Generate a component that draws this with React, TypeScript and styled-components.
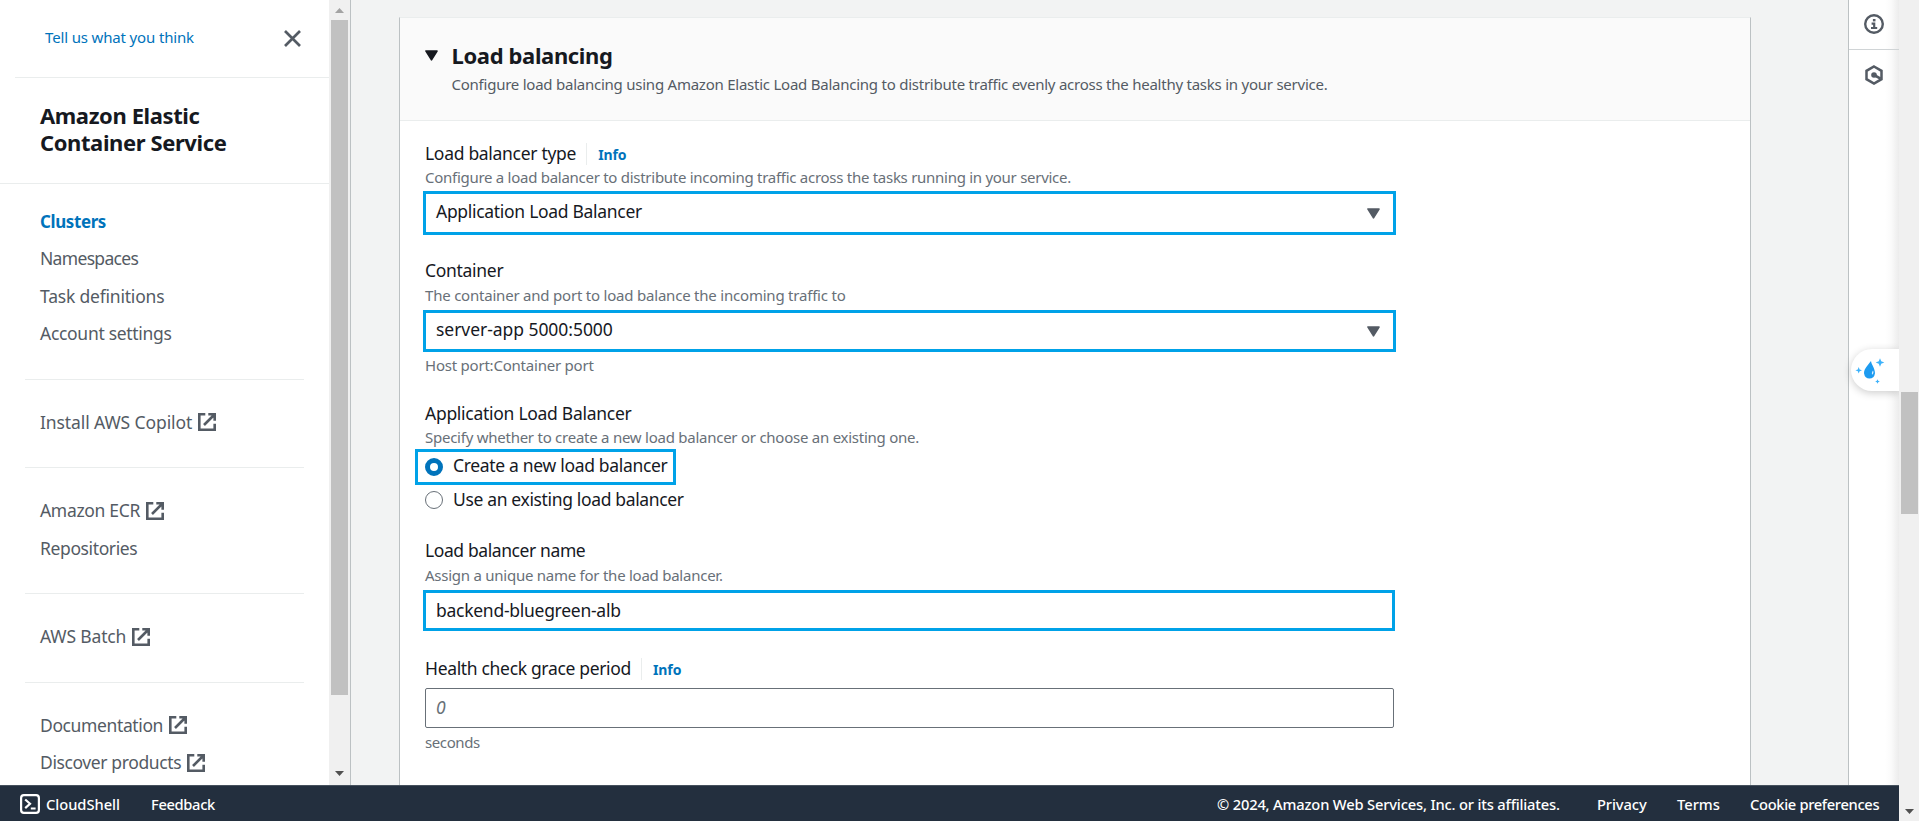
import React from 'react';
import styled, { createGlobalStyle } from 'styled-components';

const GlobalStyle = createGlobalStyle`
  * { box-sizing: border-box; }
  body {
    margin: 0;
    overflow: hidden;
    font-family: "Noto Sans", "Open Sans", sans-serif;
    color: #16191f;
  }
`;

const Page = styled.div`
  display: flex;
  width: 1919px;
  height: 821px;
  background: #f2f3f3;
`;

const Console = styled.div`
  display: flex;
  flex-direction: column;
  width: 1899px;
  height: 821px;
`;

const Workspace = styled.div`
  display: flex;
  height: 785px;
  overflow: hidden;
`;

/* ---------- scrollbars ---------- */

const Scrollbar = styled.div<{ $width: number }>`
  display: flex;
  flex-direction: column;
  align-items: center;
  flex: none;
  width: ${(p) => p.$width}px;
  height: 100%;
  background: #f0f0f0;
`;

const ArrowCell = styled.div<{ $lift?: number }>`
  display: flex;
  align-items: center;
  justify-content: center;
  height: 20px;
  flex: none;
  padding-bottom: ${(p) => p.$lift ?? 0}px;
`;

const Track = styled.div<{ $offset: number }>`
  flex: 1;
  padding-top: ${(p) => p.$offset}px;
`;

const Thumb = styled.div<{ $length: number }>`
  width: 17px;
  height: ${(p) => p.$length}px;
  background: #c1c1c1;
`;

const ScrollArrow = ({ up }: { up?: boolean }) => (
  <svg width="9" height="5" viewBox="0 0 9 5">
    <path d={up ? 'M0 5 4.5 0 9 5z' : 'M0 0 4.5 5 9 0z'} fill={up ? '#a3a3a3' : '#505050'} />
  </svg>
);

/* ---------- sidebar ---------- */

const Sidebar = styled.aside`
  display: flex;
  width: 351px;
  flex: none;
  border-right: 1px solid #bcc1c3;
  background: #fff;
`;

const SidebarContent = styled.div`
  width: 329px;
  flex: none;
  overflow: hidden;
`;

const SidebarTop = styled.div`
  display: flex;
  align-items: center;
  justify-content: space-between;
  height: 78px;
  margin-left: 15px;
  padding: 0 28px 1px 30px;
  border-bottom: 1px solid #eaeded;
`;

const FeedbackLink = styled.a`
  font-size: 15px;
  line-height: 22px;
  letter-spacing: -0.15px;
  color: #0073bb;
  margin-bottom: 2px;
`;

const ServiceTitle = styled.h2`
  height: 106px;
  margin: 0;
  padding: 24px 100px 0 40px;
  border-bottom: 1px solid #eaeded;
  font-size: 22px;
  line-height: 27px;
  font-weight: 700;
  letter-spacing: -0.4px;
`;

const Nav = styled.nav`
  padding-top: 18.5px;
`;

const NavItem = styled.a<{ $active?: boolean; $track: number }>`
  display: flex;
  align-items: center;
  gap: 6px;
  height: 37.5px;
  padding-left: 40px;
  font-size: ${(p) => (p.$active ? 16.9 : 17.5)}px;
  line-height: 27px;
  white-space: nowrap;
  letter-spacing: ${(p) => p.$track}px;
  font-weight: ${(p) => (p.$active ? 700 : 400)};
  color: ${(p) => (p.$active ? '#0073bb' : '#545b64')};
`;

const NavDivider = styled.hr`
  height: 1px;
  margin: 26px 25px 24px;
  border: 0;
  background: #eaeded;
`;

const ExternalIcon = () => (
  <svg width="18" height="18" viewBox="0 0 18 18" fill="none" stroke="#545b64" strokeWidth="2.6">
    <path d="M7.3 1.3h-6v15.4h15.4v-6" />
    <path d="M10.3 1.3h6.4v6.4M16.5 1.5 6 12" />
  </svg>
);

const CloseIcon = () => (
  <svg width="17" height="17" viewBox="0 0 17 17" stroke="#545b64" strokeWidth="2.7">
    <path d="M1 1l15 15M16 1 1 16" />
  </svg>
);

/* ---------- main panel ---------- */

const Main = styled.main`
  flex: 1;
  padding: 17px 0 0 48px;
`;

const Card = styled.section`
  width: 1352px;
  height: 780px;
  background: #fff;
  border: 1px solid #bcc1c3;
  border-top-color: #eaeded;
`;

const CardHeader = styled.header`
  display: flex;
  gap: 15px;
  height: 103px;
  padding: 23px 25px 0 24.5px;
  background: #fafafa;
  border-bottom: 1px solid #eaeded;
`;

const CardTitle = styled.h2`
  margin: 0;
  font-size: 22px;
  line-height: 28px;
  font-weight: 700;
  letter-spacing: -0.36px;
`;

const CardText = styled.p`
  margin: 0;
  padding-top: 4px;
  font-size: 15px;
  line-height: 22px;
  letter-spacing: -0.24px;
  color: #545b64;
`;

const CaretSlot = styled.div`
  padding-top: 9px;
  width: 12px;
`;

const CaretSvg = styled.svg`
  display: block;
`;

const Caret = ({ color = '#545b64' }: { color?: string }) => (
  <CaretSvg width="13" height="11" viewBox="0 0 13 11">
    <path d="M1 1h11L6.5 9.8z" fill={color} stroke={color} strokeWidth="1.6" strokeLinejoin="round" />
  </CaretSvg>
);

const CardBody = styled.div`
  padding: 19px 0 0 25px;
`;

const Field = styled.div<{ $gap?: number }>`
  display: flex;
  flex-direction: column;
  align-items: flex-start;
  padding-top: ${(p) => p.$gap ?? 0}px;
`;

const LabelRow = styled.div`
  display: flex;
  align-items: center;
  height: 26px;
`;

const Label = styled.label<{ $track: number }>`
  font-size: 17.5px;
  line-height: 26px;
  letter-spacing: ${(p) => p.$track}px;
`;

const InfoLink = styled.a`
  height: 22px;
  margin: 2px 0 0 10px;
  padding-left: 11px;
  border-left: 1px solid #eaeded;
  font-size: 14px;
  line-height: 24px;
  font-weight: 700;
  letter-spacing: -0.1px;
  color: #0073bb;
`;

const Hint = styled.div<{ $track: number; $gap?: number }>`
  margin-top: ${(p) => p.$gap ?? 0}px;
  font-size: 15px;
  line-height: 22px;
  letter-spacing: ${(p) => p.$track}px;
  color: #687078;
`;

const Control = styled.div<{ $height: number; $gap: number; $width: number; $lift: number; $track: number }>`
  display: flex;
  align-items: center;
  justify-content: space-between;
  width: ${(p) => p.$width}px;
  height: ${(p) => p.$height}px;
  margin: ${(p) => p.$gap}px 0 0 -2px;
  padding: 0 13px 0 10px;
  border: 3px solid #00a2e8;
  font-size: 17.5px;
  line-height: 27px;
  letter-spacing: ${(p) => p.$track}px;

  > span {
    padding-bottom: ${(p) => p.$lift}px;
  }
`;

const PlainInput = styled.div`
  width: 969px;
  height: 40px;
  margin-top: 7px;
  padding: 0 10px;
  border: 1px solid #687078;
  border-radius: 2px;
  font-size: 17.5px;
  line-height: 36px;
  font-style: italic;
  color: #687078;
`;

const RadioRow = styled.div<{ $selected?: boolean; $track: number }>`
  display: flex;
  align-items: center;
  gap: 10px;
  height: ${(p) => (p.$selected ? 36 : 30)}px;
  width: ${(p) => (p.$selected ? '261px' : 'auto')};
  margin-top: ${(p) => (p.$selected ? 1 : 0)}px;
  margin-left: ${(p) => (p.$selected ? -10 : 0)}px;
  padding-left: ${(p) => (p.$selected ? 7 : 0)}px;
  border: ${(p) => (p.$selected ? '3px solid #00a2e8' : '0')};
  font-size: 17.5px;
  line-height: 24px;
  letter-spacing: ${(p) => p.$track}px;
  white-space: nowrap;

  > span {
    padding-bottom: ${(p) => (p.$selected ? 4 : 3)}px;
  }
`;

const RadioMark = styled.i<{ $on?: boolean }>`
  width: 18px;
  height: 18px;
  border-radius: 50%;
  background: #fff;
  border: ${(p) => (p.$on ? '5px solid #0073bb' : '1.3px solid #687078')};
`;

/* ---------- right rail ---------- */

const Rail = styled.aside`
  position: relative;
  width: 51px;
  flex: none;
  border-left: 1px solid #bcc1c3;
  background: linear-gradient(to right, #fff 36px, #fbfbfb 42px, #ececec 50px);
`;

const RailButton = styled.div<{ $ruled?: boolean }>`
  display: flex;
  align-items: center;
  justify-content: center;
  height: 50px;
  padding-bottom: ${(p) => (p.$ruled ? 1 : 0)}px;
  border-bottom: ${(p) => (p.$ruled ? '1px solid #d0d4d6' : '0')};
`;

const AssistantTab = styled.div`
  position: absolute;
  right: 0;
  top: 349px;
  width: 48px;
  height: 42px;
  border-radius: 21px 0 0 21px;
  background: #fff;
  box-shadow: 0 2px 9px rgba(0, 0, 0, 0.2);
`;

/* ---------- footer ---------- */

const Footer = styled.footer`
  display: flex;
  align-items: center;
  height: 36px;
  padding: 0 20px;
  background: #232f3e;
  border-top: 1px solid #46515d;
  color: #fff;
  font-size: 14.7px;
  font-weight: 500;
  line-height: 22px;
  white-space: nowrap;
`;

const FooterItem = styled.span<{ $width: number; $track?: number }>`
  width: ${(p) => p.$width}px;
  letter-spacing: ${(p) => p.$track ?? 0}px;
  padding-top: 1px;
`;

const CloudShellIcon = styled.svg`
  margin-right: 6px;
`;

const Spacer = styled.div`
  flex: 1;
`;

type Link = { text: string; track: number; active?: boolean; external?: boolean };

const NAV: Link[][] = [
  [
    { text: 'Clusters', track: -0.35, active: true },
    { text: 'Namespaces', track: -0.68 },
    { text: 'Task definitions', track: -0.2 },
    { text: 'Account settings', track: -0.3 },
  ],
  [{ text: 'Install AWS Copilot', track: -0.1, external: true }],
  [
    { text: 'Amazon ECR', track: -0.32, external: true },
    { text: 'Repositories', track: -0.38 },
  ],
  [{ text: 'AWS Batch', track: -0.15, external: true }],
  [
    { text: 'Documentation', track: -0.38, external: true },
    { text: 'Discover products', track: -0.39, external: true },
  ],
];

export default function App() {
  return (
    <>
      <GlobalStyle />
      <Page>
        <Console>
          <Workspace>
            <Sidebar>
              <SidebarContent>
                <SidebarTop>
                  <FeedbackLink>Tell us what you think</FeedbackLink>
                  <CloseIcon />
                </SidebarTop>
                <ServiceTitle>Amazon Elastic Container Service</ServiceTitle>
                <Nav>
                  {NAV.map((group, i) => (
                    <React.Fragment key={i}>
                      {i > 0 && <NavDivider />}
                      {group.map((l) => (
                        <NavItem key={l.text} $track={l.track} $active={l.active}>
                          {l.text}
                          {l.external && <ExternalIcon />}
                        </NavItem>
                      ))}
                    </React.Fragment>
                  ))}
                </Nav>
              </SidebarContent>
              <Scrollbar $width={21}>
                <ArrowCell><ScrollArrow up /></ArrowCell>
                <Track $offset={0}><Thumb $length={675} /></Track>
                <ArrowCell $lift={3}><ScrollArrow /></ArrowCell>
              </Scrollbar>
            </Sidebar>

            <Main>
              <Card>
                <CardHeader>
                  <CaretSlot><Caret color="#16191f" /></CaretSlot>
                  <div>
                    <CardTitle>Load balancing</CardTitle>
                    <CardText>
                      Configure load balancing using Amazon Elastic Load Balancing to distribute traffic evenly
                      across the healthy tasks in your service.
                    </CardText>
                  </div>
                </CardHeader>
                <CardBody>
                  <Field>
                    <LabelRow>
                      <Label $track={-0.3}>Load balancer type</Label>
                      <InfoLink>Info</InfoLink>
                    </LabelRow>
                    <Hint $track={-0.275}>
                      Configure a load balancer to distribute incoming traffic across the tasks running in your service.
                    </Hint>
                    <Control $height={44} $gap={3} $width={973} $lift={3} $track={-0.3}>
                      <span>Application Load Balancer</span>
                      <Caret />
                    </Control>
                  </Field>

                  <Field $gap={22}>
                    <LabelRow><Label $track={-0.3}>Container</Label></LabelRow>
                    <Hint $track={-0.21} $gap={1}>The container and port to load balance the incoming traffic to</Hint>
                    <Control $height={42} $gap={4} $width={973} $lift={3} $track={-0.05}>
                      <span>server-app 5000:5000</span>
                      <Caret />
                    </Control>
                    <Hint $track={-0.22} $gap={2}>Host port:Container port</Hint>
                  </Field>

                  <Field $gap={24}>
                    <LabelRow><Label $track={-0.28}>Application Load Balancer</Label></LabelRow>
                    <Hint $track={-0.25}>
                      Specify whether to create a new load balancer or choose an existing one.
                    </Hint>
                    <RadioRow $selected $track={-0.32}>
                      <RadioMark $on />
                      <span>Create a new load balancer</span>
                    </RadioRow>
                    <RadioRow $track={-0.35}>
                      <RadioMark />
                      <span>Use an existing load balancer</span>
                    </RadioRow>
                  </Field>

                  <Field $gap={22}>
                    <LabelRow><Label $track={-0.4}>Load balancer name</Label></LabelRow>
                    <Hint $track={-0.25} $gap={1}>Assign a unique name for the load balancer.</Hint>
                    <Control $height={41} $gap={4} $width={972} $lift={0} $track={-0.27}>
                      <span>backend-bluegreen-alb</span>
                    </Control>
                  </Field>

                  <Field $gap={24}>
                    <LabelRow>
                      <Label $track={-0.33}>Health check grace period</Label>
                      <InfoLink>Info</InfoLink>
                    </LabelRow>
                    <PlainInput>0</PlainInput>
                    <Hint $track={-0.4} $gap={3}>seconds</Hint>
                  </Field>
                </CardBody>
              </Card>
            </Main>

            <Rail>
              <RailButton $ruled>
                <svg width="20" height="20" viewBox="0 0 20 20" fill="none" stroke="#545b64">
                  <circle cx="10" cy="10" r="8.8" strokeWidth="2.4" />
                  <path d="M10.2 5v2.4" strokeWidth="2.6" />
                  <path d="M7.6 9.6h2.6v4.4M7 14h6.2" strokeWidth="2.2" />
                </svg>
              </RailButton>
              <RailButton>
                <svg width="20" height="20" viewBox="0 0 20 20" fill="none" stroke="#545b64" strokeWidth="2.5">
                  <path d="M10 1.5l7.5 4.3v8.4L10 18.5l-7.5-4.3V5.8z" />
                  <path d="M10 10l6.6 3.7" strokeWidth="2.6" />
                  <circle cx="10" cy="10" r="2.8" fill="#545b64" stroke="none" />
                </svg>
              </RailButton>
              <AssistantTab>
                <svg width="48" height="42" viewBox="0 0 48 42">
                  <path d="M20 12c.3 3.6 4 7.2 4 12.2a5.6 6.6 0 0 1-11 0C13 19.5 17.5 15.5 20 12z" fill="#1d9bf0" />
                  <path d="M22 21.5c.9 1.8.4 3.6-1 4.3-.2-1.6-.1-2.8 1-4.3z" fill="#d9f0ff" />
                  <g fill="#3db2fb">
                    <path d="M29 9.2l1.2 3.1 3.1 1.2-3.1 1.2-1.2 3.1-1.2-3.1-3.1-1.2 3.1-1.2z" />
                    <path d="M7.7 18l.9 2.4 2.4.9-2.4.9-.9 2.4-.9-2.4-2.4-.9 2.4-.9z" />
                    <path d="M26.5 30.2l.7 1.6 1.6.7-1.6.7-.7 1.6-.7-1.6-1.6-.7 1.6-.7z" />
                  </g>
                </svg>
              </AssistantTab>
            </Rail>
          </Workspace>

          <Footer>
            <CloudShellIcon width="20" height="20" viewBox="0 0 20 20" fill="none" stroke="#fff" strokeWidth="2.2">
              <rect x="1.1" y="1.1" width="17.8" height="17.8" rx="2.8" />
              <path d="M5.2 5.500l4.800 4.300-4.800 4.300M10.800 14.500h4.800" />
            </CloudShellIcon>
            <FooterItem $width={105} $track={-0.03}>CloudShell</FooterItem>
            <FooterItem $width={66} $track={-0.35}>Feedback</FooterItem>
            <Spacer />
            <FooterItem $width={380} $track={-0.17}>© 2024, Amazon Web Services, Inc. or its affiliates.</FooterItem>
            <FooterItem $width={80} $track={-0.1}>Privacy</FooterItem>
            <FooterItem $width={73}>Terms</FooterItem>
            <FooterItem $width={129} $track={-0.33}>Cookie preferences</FooterItem>
          </Footer>
        </Console>
        <Scrollbar $width={20}>
          <Track $offset={392}><Thumb $length={122} /></Track>
          <ArrowCell><ScrollArrow /></ArrowCell>
        </Scrollbar>
      </Page>
    </>
  );
}
